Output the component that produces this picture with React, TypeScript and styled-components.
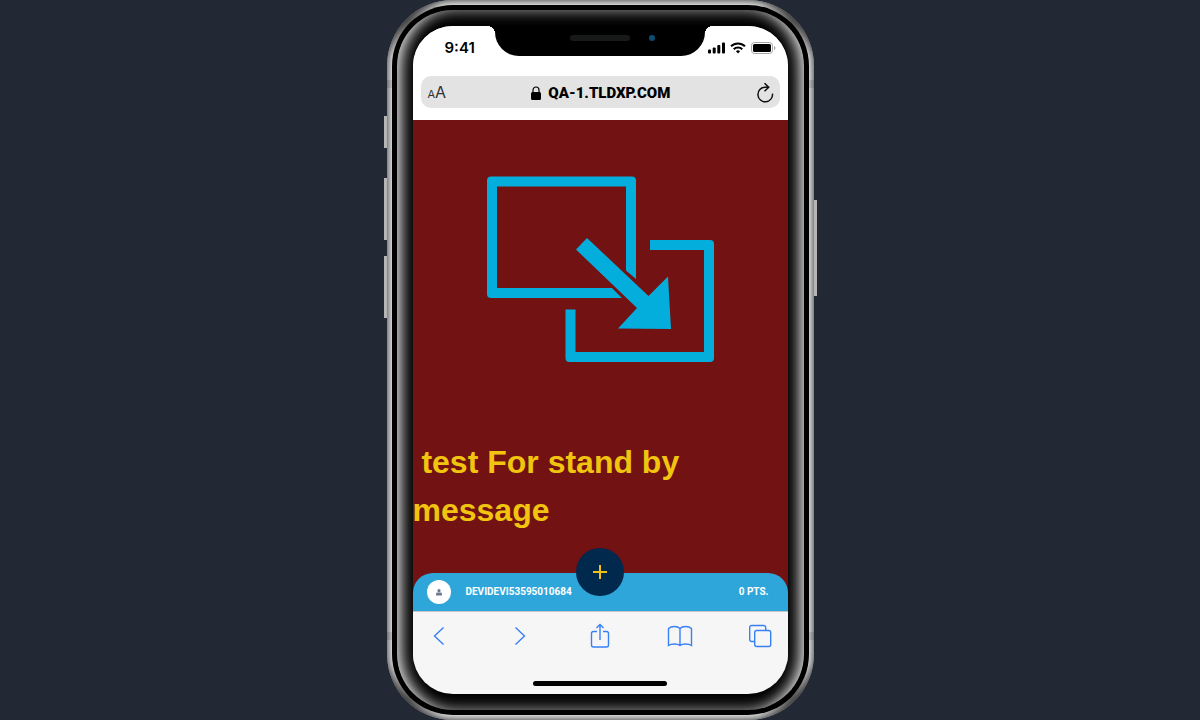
import React from 'react';
import styled, { createGlobalStyle } from 'styled-components';

const GlobalStyle = createGlobalStyle`
  *, *::before, *::after { box-sizing: border-box; }
  body { margin: 0; background: #222834; font-family: Inter, 'Liberation Sans', sans-serif; }
  button { appearance: none; border: 0; padding: 0; background: none; color: inherit; font: inherit; cursor: pointer; }
  svg { display: block; }
`;

const Stage = styled.main`
  display: flex;
  justify-content: center;
  min-height: 100vh;
`;

const Device = styled.div`
  position: relative;
  display: flex;
  width: 100%;
  max-width: 427px;
  min-height: 100vh;
  padding: 26px;
  border-radius: 66px;
  background: #fdfdfd;
  box-shadow: inset 0 0 11px 0 #000;

  &::before {
    content: '';
    position: absolute;
    inset: 5px;
    border-radius: 61px;
    background: #000;
    z-index: 1;
  }
`;

const CornerShades = styled.div`
  position: absolute;
  inset: 0;
  overflow: hidden;
  border-radius: 66px;
`;

const Shade = styled.span<{ $v: 'top' | 'bottom'; $h: 'left' | 'right' }>`
  position: absolute;
  width: 90px;
  height: 90px;
  ${p => p.$v}: -20px;
  ${p => p.$h}: -20px;
  border-radius: 100%;
  background: radial-gradient(ellipse at center, rgba(0, 0, 0, 0.6) 0%, rgba(255, 255, 255, 0) 60%);
`;

const InnerGlow = styled.div`
  position: absolute;
  inset: 10px;
  overflow: hidden;
  border-radius: 56px;
  box-shadow: inset 0 0 15px 0 rgba(255, 255, 255, 0.66);
  z-index: 1;

  &::before {
    content: '';
    position: absolute;
    top: -8%;
    left: 0;
    width: 100%;
    height: 116%;
    border-radius: 200px / 112px;
    box-shadow: inset 0 0 20px 0 #fff;
  }
`;

const Antenna = styled.span<{ $v: 'top' | 'bottom' }>`
  position: absolute;
  left: 0;
  ${p => p.$v}: 80px;
  width: 100%;
  height: 8px;
  background: rgba(0, 0, 0, 0.1);
`;

const SideKey = styled.span<{ $side: 'left' | 'right'; $top: number; $length: number }>`
  position: absolute;
  ${p => p.$side}: -3px;
  top: ${p => p.$top}px;
  width: 3px;
  height: ${p => p.$length}px;
  background: #b5b5b5;
`;

const Notch = styled.div`
  position: absolute;
  top: 26px;
  left: 50%;
  margin-left: -105px;
  width: 210px;
  height: 30px;
  border-radius: 0 0 24px 24px;
  background: #000;
  z-index: 4;

  &::before, &::after {
    content: '';
    position: absolute;
    top: 0;
    width: 8px;
    height: 8px;
  }
  &::before { left: -8px; background: radial-gradient(circle at bottom left, transparent 70%, #000 70%); }
  &::after { right: -8px; background: radial-gradient(circle at bottom right, transparent 70%, #000 70%); }
`;

const Speaker = styled.span`
  position: absolute;
  top: 9px;
  left: 75px;
  width: 60px;
  height: 6px;
  border-radius: 6px;
  background: #171818;
`;

const Camera = styled.span`
  position: absolute;
  top: 9px;
  left: 154px;
  width: 6px;
  height: 6px;
  border-radius: 50%;
  background: #0d4d71;
`;

const Screen = styled.div`
  position: relative;
  z-index: 3;
  flex: 1;
  min-width: 0;
  display: flex;
  flex-direction: column;
  overflow: hidden;
  border-radius: 40px;
  background: #f6f6f6;
`;

const StatusBar = styled.header`
  display: flex;
  align-items: center;
  justify-content: space-between;
  height: 50px;
  padding: 0 12px 6px 32px;
  background: #fff;
`;

const Clock = styled.time`
  font-size: 15px;
  font-weight: 600;
  line-height: 20px;
  color: #000;
`;

const StatusIcons = styled.div`
  display: flex;
  align-items: center;
  gap: 5px;
`;

const AddressArea = styled.div`
  padding: 0 8px 12px;
  background: #fff;
`;

const AddressBar = styled.div`
  display: flex;
  align-items: center;
  justify-content: space-between;
  height: 32px;
  padding: 2px 6px 0 7px;
  border-radius: 10px;
  background: #e3e3e3;
`;

const TextSize = styled.button`
  font-size: 16px;
  line-height: 20px;
  color: #333;
  small { font-size: 11px; }
`;

const Address = styled.div`
  display: flex;
  align-items: center;
  gap: 7px;
  font-family: Roboto, 'Liberation Sans', sans-serif;
  font-size: 15px;
  font-weight: 900;
  line-height: 20px;
  color: #000;
`;

const Page = styled.section`
  flex: 1;
  display: flex;
  flex-direction: column;
  background: #721212;
`;

const Artwork = styled.svg`
  align-self: center;
  margin: 56px 0 75px;
`;

const Message = styled.h1`
  flex: 1;
  margin: 0;
  font-family: 'Liberation Sans', sans-serif;
  font-size: 32px;
  font-weight: 700;
  line-height: 48px;
  color: #f1c40f;
`;

const PlayerBar = styled.footer`
  position: relative;
  display: flex;
  align-items: center;
  height: 38px;
  padding: 0 19px 0 14px;
  border-radius: 20px 20px 0 0;
  background: #2ea6da;
  color: #fff;
  font-family: Roboto, 'Liberation Sans', sans-serif;
  font-size: 10px;
  font-weight: 700;
  line-height: 12px;
`;

const Avatar = styled.span`
  display: grid;
  place-items: center;
  width: 24px;
  height: 24px;
  margin-right: 15px;
  border-radius: 50%;
  background: #fff;
`;

const Points = styled.span`
  margin-left: auto;
`;

const AddButton = styled.button`
  position: absolute;
  left: 50%;
  bottom: 15px;
  display: grid;
  place-items: center;
  width: 48px;
  height: 48px;
  margin-left: -24px;
  border-radius: 50%;
  background: #01284d;
`;

const Toolbar = styled.nav`
  display: flex;
  align-items: center;
  justify-content: space-between;
  height: 50px;
  padding: 0 14px 2px;
  border-top: 1px solid #c4c4c4;
  background: #f6f6f6;
`;

const ToolButton = styled.button`
  display: grid;
  place-items: center;
  width: 26px;
  height: 26px;
`;

const HomeArea = styled.div`
  display: flex;
  justify-content: center;
  align-items: flex-end;
  height: 33px;
  padding-bottom: 8px;
`;

const HomeIndicator = styled.span`
  width: 134px;
  height: 5px;
  border-radius: 3px;
  background: #000;
`;

const tools = [
  { label: 'Back', art: <path d="M16.500 4.500 7.500 13l9 8.500" /> },
  { label: 'Forward', art: <path d="M8.500 4.500 17.500 13l-9 8.500" /> },
  { label: 'Share', art: <path d="M10 8.500H6.500a2 2 0 0 0-2 2V22a2 2 0 0 0 2 2h13a2 2 0 0 0 2-2V10.500a2 2 0 0 0-2-2H16M13 17V1.500M9.500 5 13 1.500 16.500 5" /> },
  { label: 'Bookmarks', art: <path d="M13 5.500C10.500 2.800 4.500 2.800 1.500 5.500v17c3-2 9-2 11.500 0 2.500-2 8.500-2 11.500 0v-17C21.500 2.800 15.500 2.800 13 5.500v17" /> },
  { label: 'Tabs', art: <><rect x="6.700" y="7.500" width="16" height="16" rx="2" /><path d="M6.700 18.500h-3a2 2 0 0 1-2-2v-12a2 2 0 0 1 2-2h12a2 2 0 0 1 2 2v3" /></> },
];

export default function App() {
  return (
    <>
      <GlobalStyle />
      <Stage>
        <Device>
          <SideKey $side="left" $top={116} $length={32} />
          <SideKey $side="left" $top={178} $length={62} />
          <SideKey $side="left" $top={256} $length={62} />
          <SideKey $side="right" $top={200} $length={96} />
          <Antenna $v="top" />
          <Antenna $v="bottom" />
          <CornerShades>
            <Shade $v="top" $h="left" />
            <Shade $v="top" $h="right" />
            <Shade $v="bottom" $h="left" />
            <Shade $v="bottom" $h="right" />
          </CornerShades>
          <InnerGlow />
          <Notch><Speaker /><Camera /></Notch>
          <Screen>
            <StatusBar>
              <Clock>9:41</Clock>
              <StatusIcons>
                <svg width="17" height="12" viewBox="0 0 17 12" aria-hidden="true">
                  <rect x="0" y="7.500" width="3" height="4" rx="1" />
                  <rect x="4.700" y="5.500" width="3" height="6" rx="1" />
                  <rect x="9.300" y="3" width="3" height="8.500" rx="1" />
                  <rect x="14" y="0.500" width="3" height="11" rx="1" />
                </svg>
                <svg width="16" height="12" viewBox="0 0 16 12" fill="none" stroke="#000" strokeWidth="2" aria-hidden="true">
                  <path d="M1 4.300a10 10 0 0 1 14 0M3.700 7.200a6.200 6.200 0 0 1 8.600 0" />
                  <path d="M8 11.400 5.900 9.300a3 3 0 0 1 4.200 0Z" fill="#000" stroke="none" />
                </svg>
                <svg width="25" height="12" viewBox="0 0 25 12" aria-hidden="true">
                  <rect x="0.500" y="0.500" width="21" height="11" rx="3" fill="none" stroke="#a6a6a6" />
                  <rect x="2" y="2" width="18" height="8" rx="1.500" />
                  <path d="M23 4v4q1.500-.7 1.500-2T23 4" fill="#a6a6a6" />
                </svg>
              </StatusIcons>
            </StatusBar>
            <AddressArea>
              <AddressBar>
                <TextSize aria-label="Text size"><small>A</small>A</TextSize>
                <Address>
                  <svg width="10" height="14" viewBox="0 0 10 14" aria-hidden="true">
                    <rect y="6" width="10" height="8" rx="1.500" />
                    <path d="M2 7V4a3 3 0 0 1 6 0v3" fill="none" stroke="#000" strokeWidth="1.200" />
                  </svg>
                  QA-1.TLDXP.COM
                </Address>
                <button aria-label="Reload">
                  <svg width="18" height="20" viewBox="0 0 18 20" fill="none" stroke="#111" strokeWidth="1.500" aria-hidden="true">
                    <path d="M12.500 4.200H9a7.300 7.300 0 1 0 7.500 6.500M8.500.2 12.700 4.200 8.500 8.200" />
                  </svg>
                </button>
              </AddressBar>
            </AddressArea>
            <Page>
              <Artwork width="227" height="187" viewBox="487 176 227 187" fill="#04aedc" role="img" aria-label="Resize">
                <path d="M491 176.500H632a4 4 0 0 1 4 4V279l-10-8.500V186.500H497V288H612l10 10H491a4 4 0 0 1-4-4V180.500a4 4 0 0 1 4-4Z" />
                <path d="M650 240h60a4 4 0 0 1 4 4V358a4 4 0 0 1-4 4H569.500a4 4 0 0 1-4-4V309.500h10V352H704V250H650Z" />
                <path d="M587 238 648.500 296 668 276.500 671 329 618 328.500 637 308 576 249.500Z" />
              </Artwork>
              <Message>&nbsp;test For stand by message</Message>
              <PlayerBar>
                <Avatar>
                  <svg width="6" height="7" viewBox="0 0 6 7" fill="#6e7a91" aria-hidden="true">
                    <circle cx="3" cy="1.700" r="1.600" />
                    <path d="M0 6.500V5q0-1.400 1.500-1.400h3Q6 3.600 6 5v1.500Z" />
                  </svg>
                </Avatar>
                <span>DEVIDEVI53595010684</span>
                <Points>0 PTS.</Points>
                <AddButton aria-label="Add">
                  <svg width="14" height="14" viewBox="0 0 14 14" fill="none" stroke="#f1c40f" strokeWidth="2" aria-hidden="true">
                    <path d="M7 0v14M0 7h14" />
                  </svg>
                </AddButton>
              </PlayerBar>
            </Page>
            <Toolbar aria-label="Browser">
              {tools.map(tool => (
                <ToolButton key={tool.label} aria-label={tool.label}>
                  <svg width="26" height="26" viewBox="0 0 26 26" fill="none" stroke="#3880f6" strokeWidth="1.400" aria-hidden="true">{tool.art}</svg>
                </ToolButton>
              ))}
            </Toolbar>
            <HomeArea><HomeIndicator /></HomeArea>
          </Screen>
        </Device>
      </Stage>
    </>
  );
}
